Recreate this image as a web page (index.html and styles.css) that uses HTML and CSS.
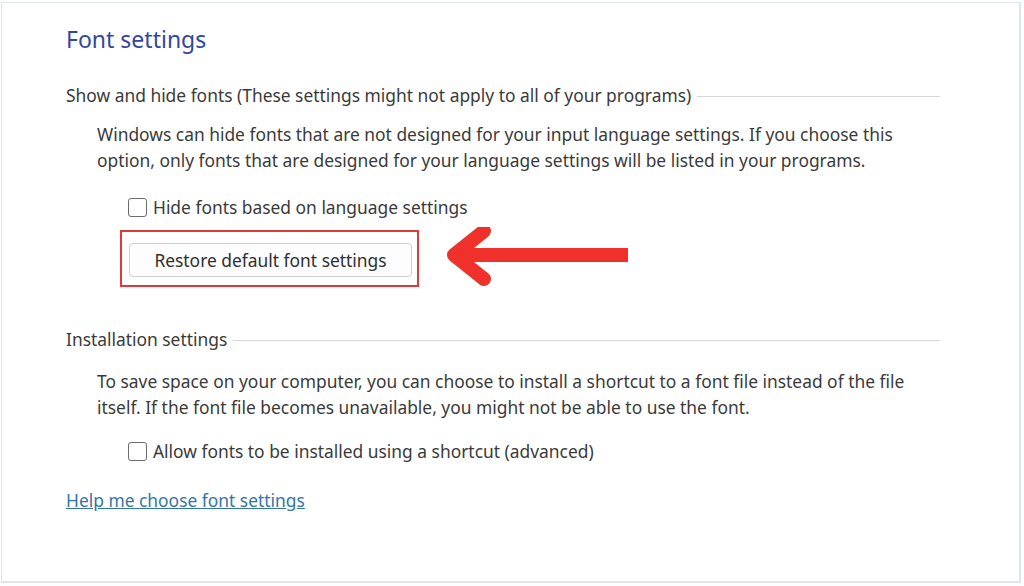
FILE: index.html
```html
<!DOCTYPE html>
<html>
<head>
<meta charset="utf-8">
<link rel="stylesheet" href="styles.css">
</head>
<body>
<div class="frame">
  <h1 class="title">Font settings</h1>

  <div class="group-head"><span>Show and hide fonts (These settings might not apply to all of your programs)</span><i class="rule"></i></div>
  <p class="desc">Windows can hide fonts that are not designed for your input language settings. If you choose this<br>option, only fonts that are designed for your language settings will be listed in your programs.</p>
  <label class="check"><span class="box"></span><span>Hide fonts based on language settings</span></label>
  <div class="btn-row">
    <div class="highlight"><button class="btn">Restore default font settings</button></div>
    <svg class="arrow" width="190" height="60" viewBox="0 0 190 60">
      <path d="M184 28 H10" stroke="#f0302a" stroke-width="14" fill="none"/>
      <path d="M40 4 L10 28 L40 52" stroke="#f0302a" stroke-width="14" fill="none" stroke-linecap="round" stroke-linejoin="round"/>
    </svg>
  </div>

  <div class="group-head second"><span>Installation settings</span><i class="rule"></i></div>
  <p class="desc lower">To save space on your computer, you can choose to install a shortcut to a font file instead of the file<br>itself. If the font file becomes unavailable, you might not be able to use the font.</p>
  <label class="check tight"><span class="box"></span><span>Allow fonts to be installed using a shortcut (advanced)</span></label>

  <a class="help" href="#">Help me choose font settings</a>
</div>
</body>
</html>
```

FILE: styles.css
```css
html, body {
  margin: 0;
  padding: 0;
  background: #ffffff;
}
body {
  width: 1024px;
  height: 586px;
  overflow: hidden;
  font-family: "Noto Sans", "Open Sans", sans-serif;
  color: #3a3a3a;
}
.frame {
  box-sizing: border-box;
  margin: 2px 0 0 1px;
  width: 1020px;
  height: 581px;
  border: 1px solid #dfe5ee;
  border-width: 1px 2px 2px 1px;
  padding: 0 0 0 64px;
  position: relative;
}
.title {
  margin: 20px 0 0 0;
  font-weight: 400;
  font-size: 23px;
  line-height: 32px;
  color: #34479a;
}
.group-head {
  display: flex;
  align-items: center;
  width: 874px;
  margin-top: 27px;
  font-size: 17.4px;
  line-height: 26px;
}
.group-head.second {
  margin-top: 39px;
}
.group-head .rule {
  flex: 1;
  height: 1px;
  background: #d8d8d8;
  margin: 3px 0 0 6px;
}
.desc {
  margin: 13px 0 0 31px;
  font-size: 17.4px;
  line-height: 26px;
}
.desc.lower {
  margin-top: 16px;
}
.check {
  display: flex;
  align-items: center;
  margin: 23px 0 0 62px;
  font-size: 17.4px;
  line-height: 22px;
  gap: 6px;
}
.check.tight {
  margin-top: 20px;
}
.box {
  width: 17px;
  height: 17px;
  border: 1px solid #6b6b6b;
  border-radius: 3px;
  background: #fff;
}
.btn-row {
  display: flex;
  align-items: center;
  margin: 11px 0 0 54px;
}
.highlight {
  box-sizing: border-box;
  width: 299px;
  height: 57px;
  border: 2px solid #e0393a;
  padding: 11px 0 0 7px;
}
.btn {
  box-sizing: border-box;
  width: 283px;
  height: 34px;
  border: 1px solid #d0d0d0;
  border-radius: 4px;
  background: #fdfdfd;
  font-family: inherit;
  font-size: 17.4px;
  color: #2f2f2f;
  padding: 0;
}
.arrow {
  margin-left: 25px;
  margin-top: -2px;
}
.help {
  display: inline-block;
  margin-top: 25px;
  font-size: 17.4px;
  line-height: 26px;
  color: #3475a8;
  text-decoration: underline;
}
```
